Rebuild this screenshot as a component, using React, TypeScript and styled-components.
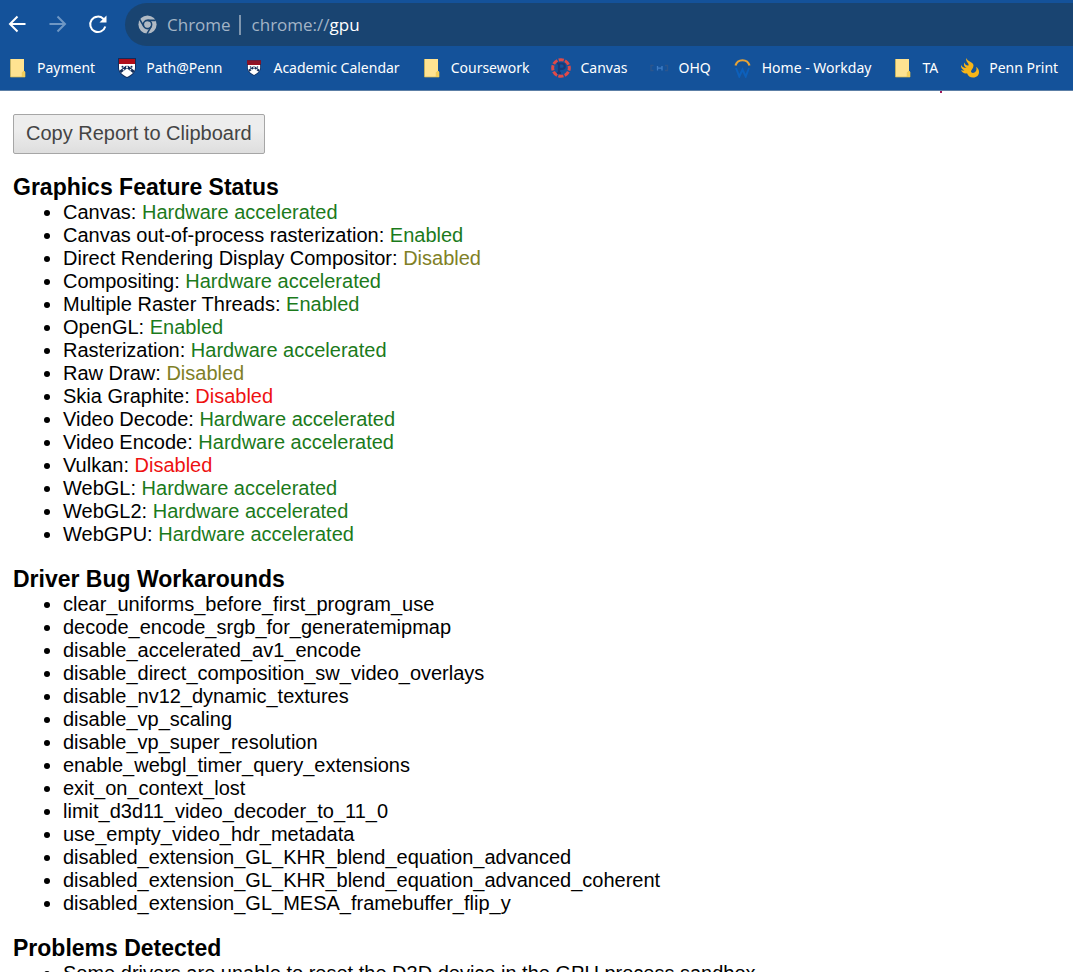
import React from "react";
import styled, { createGlobalStyle } from "styled-components";

const GlobalStyle = createGlobalStyle`
  * { box-sizing: border-box; }
  body {
    margin: 0;
    background: #fff;
    color: #000;
    font-family: "Liberation Sans", Arial, sans-serif;
  }
`;

const Window = styled.div`
  display: flex;
  flex-direction: column;
  height: 100vh;
  overflow: hidden;
`;

const BrowserBar = styled.header`
  flex: none;
  background: #14529a;
  border-bottom: 1px solid #5c7fa6;
  color: #fff;
  font-family: "Noto Sans", "Open Sans", sans-serif;
`;

const Toolbar = styled.div`
  display: flex;
  align-items: center;
  padding-top: 3px;
  height: 46px;
`;

const NavButtons = styled.nav`
  display: flex;
  gap: 16px;
  padding: 0 15px 0 6px;
`;

const NavButton = styled.button`
  display: flex;
  padding: 0;
  border: 0;
  background: none;
  color: #fff;
  &:disabled { color: #6f97c4; }
`;

const AddressBar = styled.div`
  display: flex;
  align-items: center;
  flex: 1;
  height: 43px;
  padding-left: 13px;
  border-radius: 22px 0 0 22px;
  background: #194471;
  color: #a3b4c6;
  font-family: "Open Sans", "Noto Sans", sans-serif;
  font-size: 17px;
`;

const SiteName = styled.span`
  margin-left: 10px;
  padding-right: 8px;
`;

const Divider = styled.span`
  width: 2px;
  height: 20px;
  margin-right: 11px;
  background: #7f96ae;
`;

const Address = styled.a`
  color: #a3b4c6;
  text-decoration: none;
`;

const Host = styled.span`
  color: #fff;
`;

const Bookmarks = styled.nav`
  display: flex;
  align-items: center;
  gap: 22px;
  height: 44px;
  padding-left: 8px;
  overflow: hidden;
`;

const Bookmark = styled.a`
  display: flex;
  align-items: center;
  flex: none;
  gap: 9px;
  color: #fff;
  font-size: 14px;
  line-height: 20px;
  text-decoration: none;
  white-space: nowrap;
`;

const Page = styled.main`
  flex: 1;
  min-height: 0;
  padding: 0 13px;
  overflow: hidden;
`;

const Marker = styled.div`
  width: 2px;
  height: 2px;
  margin: 0 118px 21px auto;
  background: #a3195b;
`;

const CopyButton = styled.button`
  display: block;
  height: 40px;
  padding: 0 12px 2px;
  border: 1px solid #a6a6a6;
  border-radius: 2px;
  background: linear-gradient(#ededed 38%, #dedede);
  color: #444;
  font-family: inherit;
  font-size: 20px;
  white-space: nowrap;
`;

const Section = styled.section`
  margin-top: 20px;
`;

const Heading = styled.h3`
  margin: 0;
  font-size: 23px;
  line-height: 27px;
`;

const List = styled.ul`
  margin: 0;
  padding-left: 50px;
  font-size: 20px;
  line-height: 23px;
`;

const statusColors = { good: "#1b7a1b", off: "#808026", bad: "#ee1111" };
type Tone = keyof typeof statusColors;

const Status = styled.span<{ $tone: Tone }>`
  color: ${(p) => statusColors[p.$tone]};
`;

const BackIcon = () => (
  <svg width="24" height="24" viewBox="0 0 24 24" fill="none" stroke="currentColor" strokeWidth="2">
    <path d="M19.500 11H4.500M11.500 3.500 4 11l7.500 7.500" />
  </svg>
);

const ForwardIcon = () => (
  <svg width="24" height="24" viewBox="0 0 24 24" fill="none" stroke="currentColor" strokeWidth="2">
    <path d="M3.500 11h15M11.500 3.500 19 11l-7.500 7.500" />
  </svg>
);

const ReloadIcon = () => (
  <svg width="24" height="24" viewBox="0 0 24 24" fill="none" stroke="currentColor" strokeWidth="2">
    <path d="M19.300 13.500A7.700 7.700 0 1 1 17.300 5.800L19 7.500" />
    <path d="M20.500 2.500V9.500h-7z" fill="currentColor" stroke="none" />
  </svg>
);

const ChromeIcon = () => (
  <svg width="19" height="19" viewBox="0 0 24 24">
    <circle cx="12" cy="12" r="11.500" fill="#b1bac4" />
    <g fill="none" stroke="#194471" strokeWidth="2">
      <path d="M12 6.800h10.500M7.500 14.600 2.200 5.500M16.500 14.600l-5.200 9.200" />
      <circle cx="12" cy="12" r="5.200" />
    </g>
    <circle cx="12" cy="12" r="3.600" fill="#b1bac4" />
  </svg>
);

const FolderIcon = () => (
  <svg width="20" height="20" viewBox="0 0 20 20">
    <path d="M2.500 1H16v12l1 1v5H2.500z" fill="#ffe391" />
    <path d="M2.500 1v18H17v-5l-1-1-1.700 1.500V19" fill="none" stroke="#d5b94f" strokeWidth=".7" />
    <path d="M14.300 14.500 16 13l1 1v5h-2.700z" fill="#f5ce58" />
  </svg>
);

const ShieldArt = () => (
  <>
    <path d="M1 0h18v9c0 5-4 9-9 11-5-2-9-6-9-11z" fill="#122c59" />
    <path d="M2 6h16v4c0 4-3.500 7-8 9-4.500-2-8-5-8-9z" fill="#fff" />
    <path d="M2 1h16v5H2z" fill="#b00d19" />
    <path d="M10 8.700 3.200 13.800M10 8.700l6.800 5.100" stroke="#122c59" strokeWidth="2.800" />
    <g fill="#122c59">
      <circle cx="5.500" cy="8.800" r="1" />
      <circle cx="14.500" cy="8.800" r="1" />
    </g>
    <g fill="#fff">
      <circle cx="10" cy="9.300" r="1" />
      <circle cx="6.500" cy="11.800" r=".8" />
      <circle cx="13.500" cy="11.800" r=".8" />
    </g>
  </>
);

const ShieldIcon = () => (
  <svg width="20" height="20" viewBox="0 0 20 20"><ShieldArt /></svg>
);

const SmallShieldIcon = () => (
  <svg width="20" height="20" viewBox="-3 -3 26 26">
    <ShieldArt />
    <path d="M1 0h18v5H1z" fill="#8c1226" />
  </svg>
);

const CanvasIcon = () => (
  <svg width="20" height="20" viewBox="0 0 20 20" fill="none">
    <circle cx="10" cy="10" r="8.300" stroke="#e04a48" strokeWidth="3" strokeDasharray="5.200 1.319" strokeDashoffset="2.600" />
    <path d="M8 15V5.500h3a2.500 2.500 0 0 1 0 5.400H8M6 15h4M6 5.500h2" stroke="#173a78" strokeWidth="2.200" />
  </svg>
);

const QueueIcon = () => (
  <svg width="20" height="20" viewBox="0 0 20 20" fill="none">
    <path d="M3.500 7.500H1v5h2.500M15 7.500h2.500v5H15" stroke="#2d568c" strokeWidth="1.300" />
    <path d="M7.500 8v4.500M12 8v4.500M7.500 10.200H12" stroke="#3f7dc6" strokeWidth="1.300" />
  </svg>
);

const WorkdayIcon = () => (
  <svg width="20" height="20" viewBox="0 0 20 20" fill="none">
    <path d="M2.500 7.500a7.300 7.300 0 0 1 14 0" stroke="#e8a336" strokeWidth="2.200" />
    <path d="m3 10 3.300 8.500 3.200-7 3.200 7L16 10" stroke="#0d60bb" strokeWidth="2" />
  </svg>
);

const FlameIcon = () => (
  <svg width="20" height="20" viewBox="0 0 20 20">
    <path d="M6.500 0C4.800 3.500 9.500 5 8.500 7.500 6.500 8 5 6.500 4.500 4.500c-1.500 3 .5 4.500 2 5.500C3.500 10 1.500 8.500 1 6.500c-.5 3 1 5 3.500 6-1.500.3-2.500 0-3.500-.5 1 3 4 3.800 6 3.200C8 18 10 19.500 13 19.500c4 0 6-2.500 6-5.500 0-2.500-1.200-4-3-5 1.200 2.300.3 4.500-1.500 5.500-1.500.8-3.500.3-3.500-1 0-2 2.500-3 2.500-6C13.500 4 7 3.500 6.500 0z" fill="#f7b519" />
  </svg>
);

const bookmarks: { label: string; Icon: React.FC }[] = [
  { label: "Payment", Icon: FolderIcon },
  { label: "Path@Penn", Icon: ShieldIcon },
  { label: "Academic Calendar", Icon: SmallShieldIcon },
  { label: "Coursework", Icon: FolderIcon },
  { label: "Canvas", Icon: CanvasIcon },
  { label: "OHQ", Icon: QueueIcon },
  { label: "Home - Workday", Icon: WorkdayIcon },
  { label: "TA", Icon: FolderIcon },
  { label: "Penn Print", Icon: FlameIcon },
];

const features: [string, string, Tone][] = [
  ["Canvas", "Hardware accelerated", "good"],
  ["Canvas out-of-process rasterization", "Enabled", "good"],
  ["Direct Rendering Display Compositor", "Disabled", "off"],
  ["Compositing", "Hardware accelerated", "good"],
  ["Multiple Raster Threads", "Enabled", "good"],
  ["OpenGL", "Enabled", "good"],
  ["Rasterization", "Hardware accelerated", "good"],
  ["Raw Draw", "Disabled", "off"],
  ["Skia Graphite", "Disabled", "bad"],
  ["Video Decode", "Hardware accelerated", "good"],
  ["Video Encode", "Hardware accelerated", "good"],
  ["Vulkan", "Disabled", "bad"],
  ["WebGL", "Hardware accelerated", "good"],
  ["WebGL2", "Hardware accelerated", "good"],
  ["WebGPU", "Hardware accelerated", "good"],
];

const workarounds = [
  "clear_uniforms_before_first_program_use",
  "decode_encode_srgb_for_generatemipmap",
  "disable_accelerated_av1_encode",
  "disable_direct_composition_sw_video_overlays",
  "disable_nv12_dynamic_textures",
  "disable_vp_scaling",
  "disable_vp_super_resolution",
  "enable_webgl_timer_query_extensions",
  "exit_on_context_lost",
  "limit_d3d11_video_decoder_to_11_0",
  "use_empty_video_hdr_metadata",
  "disabled_extension_GL_KHR_blend_equation_advanced",
  "disabled_extension_GL_KHR_blend_equation_advanced_coherent",
  "disabled_extension_GL_MESA_framebuffer_flip_y",
];

export default function App() {
  return (
    <Window>
      <GlobalStyle />
      <BrowserBar>
        <Toolbar>
          <NavButtons>
            <NavButton aria-label="Back"><BackIcon /></NavButton>
            <NavButton aria-label="Forward" disabled><ForwardIcon /></NavButton>
            <NavButton aria-label="Reload"><ReloadIcon /></NavButton>
          </NavButtons>
          <AddressBar>
            <ChromeIcon />
            <SiteName>Chrome</SiteName>
            <Divider />
            <Address href="#gpu">chrome://<Host>gpu</Host></Address>
          </AddressBar>
        </Toolbar>
        <Bookmarks>
          {bookmarks.map(({ label, Icon }) => (
            <Bookmark key={label} href="#"><Icon />{label}</Bookmark>
          ))}
        </Bookmarks>
      </BrowserBar>
      <Page>
        <Marker />
        <CopyButton>Copy Report to Clipboard</CopyButton>
        <Section>
          <Heading>Graphics Feature Status</Heading>
          <List>
            {features.map(([name, status, tone]) => (
              <li key={name}>{name}: <Status $tone={tone}>{status}</Status></li>
            ))}
          </List>
        </Section>
        <Section>
          <Heading>Driver Bug Workarounds</Heading>
          <List>
            {workarounds.map((name) => <li key={name}>{name}</li>)}
          </List>
        </Section>
        <Section>
          <Heading>Problems Detected</Heading>
          <List>
            <li>Some drivers are unable to reset the D3D device in the GPU process sandbox</li>
          </List>
        </Section>
      </Page>
    </Window>
  );
}
